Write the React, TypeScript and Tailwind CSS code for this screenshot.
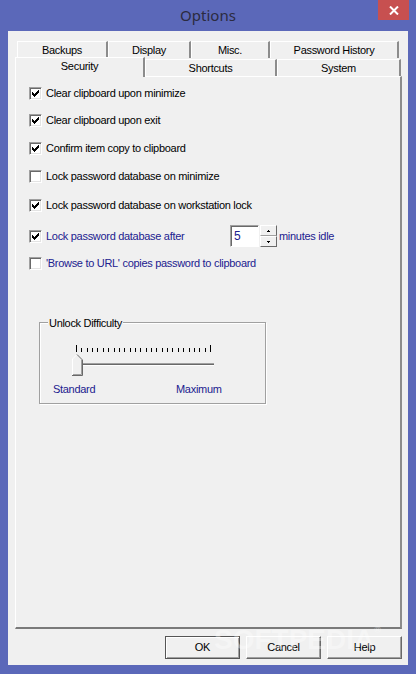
import React from "react";

function Box({ checked }: { checked?: boolean }) {
  return (
    <span className="w-[13px] h-[13px] shrink-0 bg-white border border-t-[#a0a0a0] border-l-[#a0a0a0] border-r-white border-b-white shadow-[inset_1px_1px_0_#696969,inset_-1px_-1px_0_#e3e3e3] flex items-center justify-center">
      {checked && (
        <svg width="7" height="7" viewBox="0 0 7 7" shapeRendering="crispEdges">
          <path d="M0 2h1v1h1v1h1V3h1V2h1V1h1V0h1v3h-1v1h-1v1h-1v1h-1v1h-1v-1h-1v-1h-1v-1H0z" fill="#000" />
        </svg>
      )}
    </span>
  );
}

function Row({
  checked,
  label,
  blue,
  mt,
}: {
  checked?: boolean;
  label: string;
  blue?: boolean;
  mt: string;
}) {
  return (
    <div className={`flex items-center h-[22px] gap-[4px] ${mt}`}>
      <Box checked={checked} />
      <span className={blue ? "text-[#21218f]" : "text-black"}>{label}</span>
    </div>
  );
}

function Tab({ label, w, sel }: { label: string; w: string; sel?: boolean }) {
  return (
    <div
      className={`${w} ${
        sel ? "h-[20px] relative z-10 -mb-px pb-[3px]" : "h-[17px]"
      } shrink-0 bg-[#f0f0f0] border-t border-l border-white border-r-2 border-r-[#8c8c8c] flex items-center justify-center text-black`}
    >
      {label}
    </div>
  );
}

function Btn({ label, def }: { label: string; def?: boolean }) {
  return (
    <div
      className={`w-[75px] h-[23px] bg-[#f0f0f0] flex items-center justify-center text-black border ${
        def
          ? "border-[#555555] shadow-[inset_1px_1px_0_#fff,inset_-1px_-1px_0_#a0a0a0]"
          : "border-t-white border-l-white border-r-[#696969] border-b-[#696969] shadow-[inset_-1px_-1px_0_#a0a0a0]"
      }`}
    >
      {label}
    </div>
  );
}

function Slider() {
  const ticks = Array.from({ length: 26 }, (_, i) => 7 + Math.round((i * 134) / 25));
  return (
    <svg width="150" height="32" viewBox="0 0 150 32" shapeRendering="crispEdges">
      {ticks.map((x, i) => (
        <rect
          key={i}
          x={x}
          y={i === 0 || i === 25 ? 1 : 4}
          width="1"
          height={i === 0 || i === 25 ? 7 : 4}
          fill="#000"
        />
      ))}
      <rect x="10" y="19" width="135" height="1" fill="#a0a0a0" />
      <rect x="10" y="20" width="135" height="1" fill="#696969" />
      <rect x="10" y="21" width="135" height="1" fill="#ffffff" />
      <polygon points="3,15 8,10 13,15 13,31 3,31" fill="#f0f0f0" />
      <polyline points="3.5,31 3.5,15 8,10.5" fill="none" stroke="#ffffff" strokeWidth="1" shapeRendering="auto" />
      <polyline points="8,10.5 13.5,16 13.5,31.5 3,31.5" fill="none" stroke="#696969" strokeWidth="1" shapeRendering="auto" />
      <polyline points="12.5,16 12.5,30.5 4,30.5" fill="none" stroke="#a0a0a0" strokeWidth="1" shapeRendering="auto" />
    </svg>
  );
}

export default function App() {
  return (
    <div className="w-[416px] h-[674px] bg-[#5b68b9] flex flex-col font-['Liberation_Sans',Arial,sans-serif] text-[11px] tracking-[-0.3px] relative overflow-hidden">
      {/* Title bar */}
      <div className="h-[31px] shrink-0 relative flex items-center justify-center">
        <span className="font-['Noto_Sans',sans-serif] text-[15px] tracking-normal text-[#2b2b40] -mt-[1px]">
          Options
        </span>
        <div className="absolute right-[7px] top-0 w-[31px] h-[20px] bg-[#c75050] flex items-center justify-center">
          <svg width="10" height="9" viewBox="0 0 10 9">
            <path d="M1 0.5 L9 8.5 M9 0.5 L1 8.5" stroke="#ffffff" strokeWidth="2" />
          </svg>
        </div>
      </div>

      {/* Client area */}
      <div className="mx-[8px] mb-[9px] flex-1 bg-[#f0f0f0] flex flex-col pl-[7px] pr-[6px] pt-[10px]">
        {/* Tabs row 1 */}
        <div className="flex h-[16px] pl-[2px] items-start">
          <Tab label="Backups" w="w-[91px]" />
          <Tab label="Display" w="w-[83px]" />
          <Tab label="Misc." w="w-[79px]" />
          <Tab label="Password History" w="w-[129px]" />
        </div>
        {/* Tabs row 2 */}
        <div className="flex h-[19px] items-end">
          <Tab label="Security" w="w-[130px]" sel />
          <Tab label="Shortcuts" w="w-[132px]" />
          <Tab label="System" w="w-[124px]" />
        </div>

        {/* Panel */}
        <div className="flex-1 bg-[#f0f0f0] border-t border-l border-white border-r-2 border-r-[#8c8c8c] border-b-2 border-b-[#7a7a7a] flex flex-col pl-[13px]">
          <Row checked label="Clear clipboard upon minimize" mt="mt-[5px]" />
          <Row checked label="Clear clipboard upon exit" mt="mt-[5px]" />
          <Row checked label="Confirm item copy to clipboard" mt="mt-[6px]" />
          <Row label="Lock password database on minimize" mt="mt-[6px]" />
          <Row checked label="Lock password database on workstation lock" mt="mt-[7px]" />

          <div className="flex items-center h-[22px] gap-[4px] mt-[9px]">
            <Box checked />
            <span className="text-[#21218f] w-[184px]">Lock password database after</span>
            <div className="w-[29px] h-[22px] bg-white border border-t-[#a0a0a0] border-l-[#a0a0a0] border-r-white border-b-white shadow-[inset_1px_1px_0_#696969] flex items-center pl-[3px] text-[12px] text-[#21218f] -ml-[4px]">
              5
            </div>
            <div className="w-[17px] h-[22px] flex flex-col -ml-[3px]">
              <div className="h-[11px] bg-[#f0f0f0] border border-t-white border-l-white border-r-[#696969] border-b-[#a0a0a0] flex items-center justify-center">
                <svg width="3" height="2" viewBox="0 0 3 2"><path d="M1 0h1v1h1v1H0V1h1z" fill="#000" /></svg>
              </div>
              <div className="h-[11px] bg-[#f0f0f0] border border-t-white border-l-white border-r-[#696969] border-b-[#696969] flex items-center justify-center">
                <svg width="3" height="2" viewBox="0 0 3 2"><path d="M0 0h3v1H2v1H1V1H0z" fill="#000" /></svg>
              </div>
            </div>
            <span className="text-[#21218f] -ml-[2px]">minutes idle</span>
          </div>

          <Row label="'Browse to URL' copies password to clipboard" blue mt="mt-[5px]" />

          {/* Group box */}
          <div className="relative mt-[48px] ml-[10px] w-[227px] h-[82px] border border-[#a0a0a0] shadow-[inset_1px_1px_0_#fff,1px_1px_0_#fff] flex flex-col">
            <span className="absolute -top-[8px] left-[8px] px-[1px] bg-[#f0f0f0] text-black">
              Unlock Difficulty
            </span>
            <div className="mt-[21px] ml-[29px]">
              <Slider />
            </div>
            <div className="flex mt-[6px] ml-[13px] h-[14px] items-center text-[#21218f]">
              <span className="w-[123px]">Standard</span>
              <span>Maximum</span>
            </div>
          </div>
        </div>

        {/* Buttons */}
        <div className="flex justify-end gap-[6px] mt-[7px] mb-[6px] h-[23px] shrink-0">
          <Btn label="OK" def />
          <Btn label="Cancel" />
          <Btn label="Help" />
        </div>
      </div>

      {/* Watermark */}
      <div className="absolute left-[214px] top-[626px] text-[28px] font-bold tracking-normal text-white/35 font-['Liberation_Sans',sans-serif] pointer-events-none leading-none">
        SOFTPEDIA<span className="text-[9px] align-top">®</span>
      </div>
    </div>
  );
}
